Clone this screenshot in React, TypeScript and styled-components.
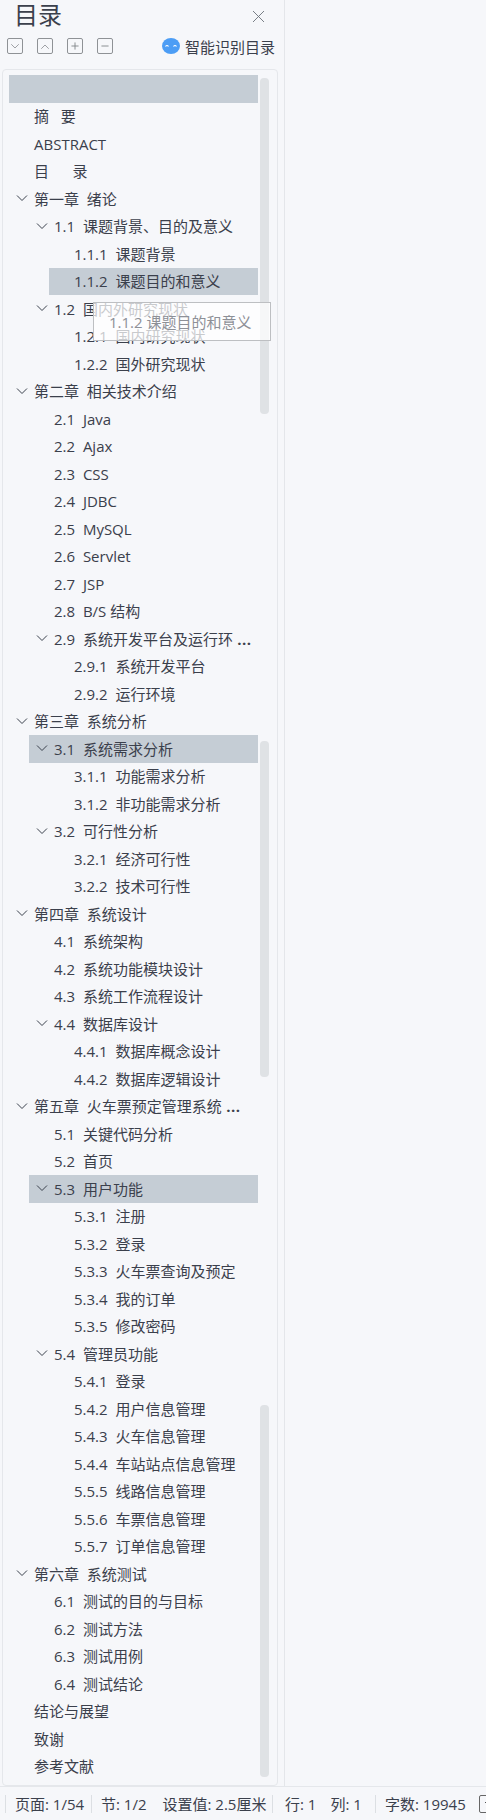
import React from 'react'
import styled, { createGlobalStyle } from 'styled-components'

type TocItem = {
    text: string
    level: number
    open?: boolean
    selected?: boolean
    cut?: boolean
}

const tocItems: Array<TocItem> = [
    { text: '', level: 0, selected: true },
    { text: '摘   要', level: 0 },
    { text: 'ABSTRACT', level: 0 },
    { text: '目      录', level: 0 },
    { text: '第一章  绪论', level: 0, open: true },
    { text: '1.1  课题背景、目的及意义', level: 1, open: true },
    { text: '1.1.1  课题背景', level: 2 },
    { text: '1.1.2  课题目的和意义', level: 2, selected: true },
    { text: '1.2  国内外研究现状', level: 1, open: true },
    { text: '1.2.1  国内研究现状', level: 2 },
    { text: '1.2.2  国外研究现状', level: 2 },
    { text: '第二章  相关技术介绍', level: 0, open: true },
    { text: '2.1  Java', level: 1 },
    { text: '2.2  Ajax', level: 1 },
    { text: '2.3  CSS', level: 1 },
    { text: '2.4  JDBC', level: 1 },
    { text: '2.5  MySQL', level: 1 },
    { text: '2.6  Servlet', level: 1 },
    { text: '2.7  JSP', level: 1 },
    { text: '2.8  B/S 结构', level: 1 },
    { text: '2.9  系统开发平台及运行环', level: 1, open: true, cut: true },
    { text: '2.9.1  系统开发平台', level: 2 },
    { text: '2.9.2  运行环境', level: 2 },
    { text: '第三章  系统分析', level: 0, open: true },
    { text: '3.1  系统需求分析', level: 1, open: true, selected: true },
    { text: '3.1.1  功能需求分析', level: 2 },
    { text: '3.1.2  非功能需求分析', level: 2 },
    { text: '3.2  可行性分析', level: 1, open: true },
    { text: '3.2.1  经济可行性', level: 2 },
    { text: '3.2.2  技术可行性', level: 2 },
    { text: '第四章  系统设计', level: 0, open: true },
    { text: '4.1  系统架构', level: 1 },
    { text: '4.2  系统功能模块设计', level: 1 },
    { text: '4.3  系统工作流程设计', level: 1 },
    { text: '4.4  数据库设计', level: 1, open: true },
    { text: '4.4.1  数据库概念设计', level: 2 },
    { text: '4.4.2  数据库逻辑设计', level: 2 },
    { text: '第五章  火车票预定管理系统', level: 0, open: true, cut: true },
    { text: '5.1  关键代码分析', level: 1 },
    { text: '5.2  首页', level: 1 },
    { text: '5.3  用户功能', level: 1, open: true, selected: true },
    { text: '5.3.1  注册', level: 2 },
    { text: '5.3.2  登录', level: 2 },
    { text: '5.3.3  火车票查询及预定', level: 2 },
    { text: '5.3.4  我的订单', level: 2 },
    { text: '5.3.5  修改密码', level: 2 },
    { text: '5.4  管理员功能', level: 1, open: true },
    { text: '5.4.1  登录', level: 2 },
    { text: '5.4.2  用户信息管理', level: 2 },
    { text: '5.4.3  火车信息管理', level: 2 },
    { text: '5.4.4  车站站点信息管理', level: 2 },
    { text: '5.5.5  线路信息管理', level: 2 },
    { text: '5.5.6  车票信息管理', level: 2 },
    { text: '5.5.7  订单信息管理', level: 2 },
    { text: '第六章  系统测试', level: 0, open: true },
    { text: '6.1  测试的目的与目标', level: 1 },
    { text: '6.2  测试方法', level: 1 },
    { text: '6.3  测试用例', level: 1 },
    { text: '6.4  测试结论', level: 1 },
    { text: '结论与展望', level: 0 },
    { text: '致谢', level: 0 },
    { text: '参考文献', level: 0 },
]

const thumbs = [
    { top: 8, height: 336 },
    { top: 671, height: 336 },
    { top: 1335, height: 372 },
]

const Chevron = ({ up }: { up?: boolean }) => (
    <svg width="12" height="7" viewBox="0 0 12 7" fill="none" stroke="currentColor" strokeWidth="1">
        <path d={up ? 'M1 6.5 6 1.5 11 6.5' : 'M1 .5 6 5.5 11 .5'} />
    </svg>
)

const App = () => {
    return (
        <Page>
            <GlobalStyle />
            <Main>
                <Sidebar>
                    <TitleRow>
                        <Title>目录</Title>
                        <svg width="13" height="13" viewBox="0 0 13 13" stroke="#6b7078" strokeWidth="0.9">
                            <path d="M1 1 12 12M12 1 1 12" />
                        </svg>
                    </TitleRow>
                    <Toolbar>
                        <ToolButton><Chevron /></ToolButton>
                        <ToolButton><Chevron up /></ToolButton>
                        <ToolButton>
                            <svg width="10" height="10" viewBox="0 0 10 10" stroke="currentColor" strokeWidth="1.2">
                                <path d="M0 5H10M5 0V10" />
                            </svg>
                        </ToolButton>
                        <ToolButton>
                            <svg width="10" height="10" viewBox="0 0 10 10" stroke="currentColor" strokeWidth="1.2">
                                <path d="M0 5H10" />
                            </svg>
                        </ToolButton>
                        <SmartButton>
                            <svg width="18" height="16" viewBox="0 0 18 16">
                                <ellipse cx="9" cy="8" rx="9" ry="8" fill="#4c9df5" />
                                <path d="M3.5 8.5Q5 6.5 6.5 8.5M11.5 8.5Q13 6.5 14.5 8.5" fill="none" stroke="#fff" strokeWidth="1.2" />
                            </svg>
                            智能识别目录
                        </SmartButton>
                    </Toolbar>
                    <TocCard>
                        {tocItems.map((item, i) => (
                            <TocRow key={i} $level={item.level} $selected={item.selected}>
                                <ArrowSlot>{item.open && <Chevron />}</ArrowSlot>
                                <RowText>
                                    {item.text}
                                    {item.cut && <CutDots> ...</CutDots>}
                                </RowText>
                            </TocRow>
                        ))}
                        {thumbs.map((t) => (
                            <ScrollThumb key={t.top} $top={t.top} $height={t.height} />
                        ))}
                        <DragGhost>1.1.2 课题目的和意义</DragGhost>
                    </TocCard>
                </Sidebar>
                <Content />
            </Main>
            <StatusBar>
                <StatusCell $width={86} $pad={9} $gap={15}>页面: 1/54</StatusCell>
                <StatusCell $width={181} $pad={9} $gap={16}>
                    <span>节: 1/2</span>
                    <span>设置值: 2.5厘米</span>
                </StatusCell>
                <StatusCell $width={103} $pad={12} $gap={14}>
                    <span>行: 1</span>
                    <span>列: 1</span>
                </StatusCell>
                <StatusCell $width={98} $pad={9} $gap={15}>字数: 19945</StatusCell>
                <CheckBox>
                    <svg width="8" height="6" viewBox="0 0 8 6" fill="none" stroke="#555" strokeWidth="1">
                        <path d="M1 1 4 4 7 1" />
                    </svg>
                </CheckBox>
            </StatusBar>
        </Page>
    )
}

const GlobalStyle = createGlobalStyle`
    html, body {
        margin: 0;
        padding: 0;
        background: #f6f7fa;
    }
    * {
        box-sizing: border-box;
    }
`

const Page = styled.div`
    width: 486px;
    height: 1820px;
    display: flex;
    flex-direction: column;
    overflow: hidden;
    background: #f6f7fa;
    color: #3b404c;
    font-family: "Open Sans", "Noto Sans CJK SC", sans-serif;
    font-size: 15px;
`

const Main = styled.div`
    flex: 1;
    min-height: 0;
    display: flex;
`

const Sidebar = styled.aside`
    width: 285px;
    display: flex;
    flex-direction: column;
    padding: 0 6px 0 2px;
    border-right: 1px solid #e4e6ea;
`

const Content = styled.div`
    flex: 1;
`

const TitleRow = styled.div`
    height: 32px;
    display: flex;
    align-items: center;
    justify-content: space-between;
    padding: 0 13px 0 12px;
`

const Title = styled.h1`
    margin: 0 0 3px;
    font-size: 24px;
    font-weight: 400;
    line-height: 29px;
`

const Toolbar = styled.div`
    height: 37px;
    display: flex;
    align-items: flex-start;
    gap: 14px;
    padding: 6px 3px 0 5px;
`

const ToolButton = styled.div`
    width: 16px;
    height: 16px;
    display: flex;
    align-items: center;
    justify-content: center;
    border: 1.5px solid #8f9296;
    border-radius: 2px;
    color: #808388;
    svg {
        transform: scale(0.75);
    }
`

const SmartButton = styled.div`
    margin-left: auto;
    display: flex;
    align-items: center;
    gap: 5px;
    height: 16px;
    font-size: 15px;
    white-space: nowrap;
`

const TocCard = styled.div`
    position: relative;
    flex: 1;
    min-height: 0;
    padding: 5px 19px 0 6px;
    border: 1px solid #e5e7eb;
    border-radius: 4px;
`

const TocRow = styled.div<{ $level: number; $selected?: boolean }>`
    height: 27.5px;
    display: flex;
    align-items: center;
    margin-left: ${(p) => p.$level * 20}px;
    background: ${(p) => (p.$selected ? '#c5cdd5' : 'transparent')};
`

const ArrowSlot = styled.span`
    width: 25px;
    flex-shrink: 0;
    display: flex;
    align-items: center;
    justify-content: center;
    color: #3b404c;
`

const RowText = styled.span`
    white-space: pre;
    line-height: 22px;
`

const CutDots = styled.b`
    font-weight: 700;
    letter-spacing: 0.5px;
`

const ScrollThumb = styled.div<{ $top: number; $height: number }>`
    position: absolute;
    top: ${(p) => p.$top}px;
    right: 8px;
    width: 9px;
    height: ${(p) => p.$height}px;
    border-radius: 4px;
    background: #dfe2e5;
`

const DragGhost = styled.div`
    position: absolute;
    top: 232px;
    left: 90px;
    width: 178px;
    height: 39px;
    display: flex;
    align-items: center;
    padding-left: 15px;
    border: 1px solid #bdbfc2;
    background: rgba(255, 255, 255, 0.72);
    color: #8d9097;
    white-space: nowrap;
`

const StatusBar = styled.footer`
    height: 34px;
    flex-shrink: 0;
    display: flex;
    align-items: center;
    padding-left: 5px;
    border-top: 1px solid #e5e7eb;
`

const StatusCell = styled.div<{ $width: number; $pad: number; $gap: number }>`
    width: ${(p) => p.$width}px;
    height: 18px;
    flex-shrink: 0;
    display: flex;
    align-items: center;
    gap: ${(p) => p.$gap}px;
    padding-left: ${(p) => p.$pad}px;
    border-left: 1px solid #dcdfe3;
    white-space: nowrap;
`

const CheckBox = styled.div`
    width: 18px;
    height: 18px;
    flex-shrink: 0;
    display: flex;
    align-items: center;
    justify-content: center;
    margin-left: 6px;
    border: 1px solid #666;
    border-radius: 2px;
`

export default App
